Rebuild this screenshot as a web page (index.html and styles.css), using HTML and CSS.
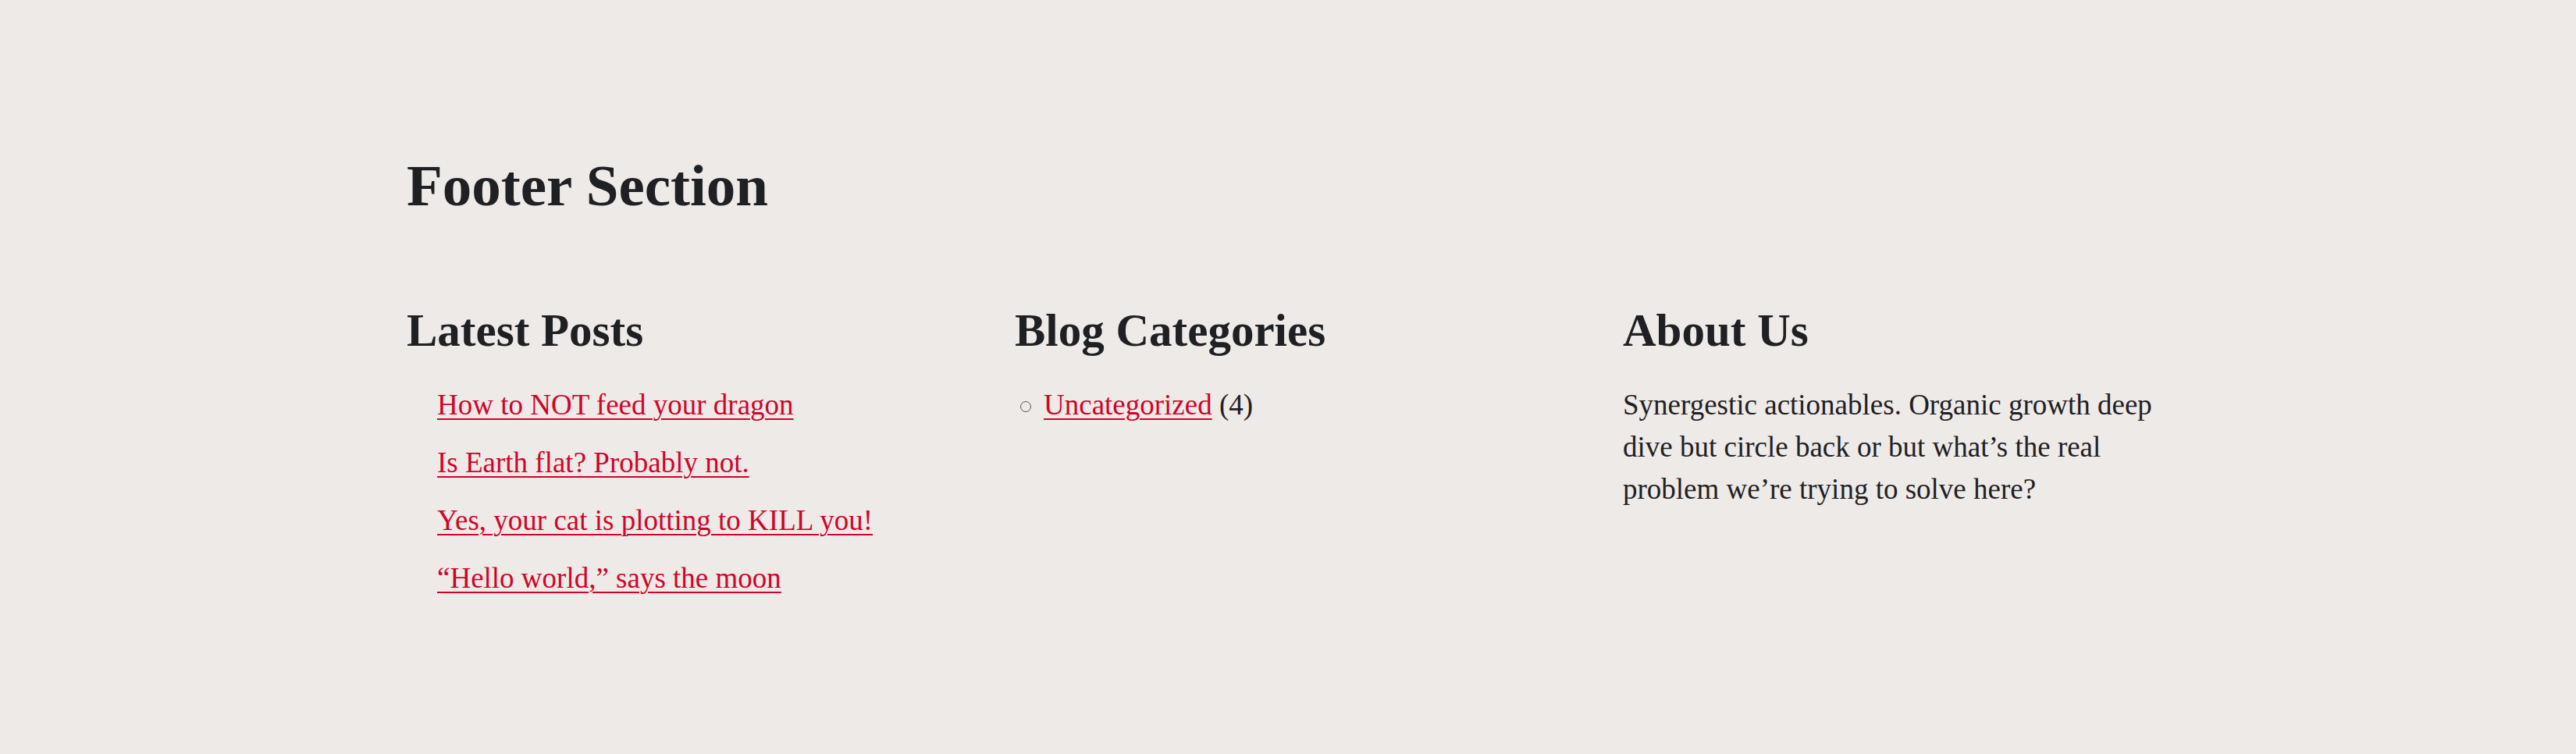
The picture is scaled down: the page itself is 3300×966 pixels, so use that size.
FILE: index.html
```html
<!DOCTYPE html>
<html lang="en">
<head>
<meta charset="utf-8">
<title>Footer Section</title>
<link rel="stylesheet" href="styles.css">
</head>
<body>
<footer class="footer">
  <div class="footer-inner">
    <h2 class="footer-title">Footer Section</h2>
    <div class="footer-columns">
      <section class="footer-col">
        <h3 class="col-title">Latest Posts</h3>
        <ul class="post-list">
          <li><a href="#">How to NOT feed your dragon</a></li>
          <li><a href="#">Is Earth flat? Probably not.</a></li>
          <li><a href="#">Yes, your cat is plotting to KILL you!</a></li>
          <li><a href="#">“Hello world,” says the moon</a></li>
        </ul>
      </section>
      <section class="footer-col">
        <h3 class="col-title">Blog Categories</h3>
        <ul class="cat-list">
          <li><a href="#">Uncategorized</a> (4)</li>
        </ul>
      </section>
      <section class="footer-col">
        <h3 class="col-title">About Us</h3>
        <p class="about-text">Synergestic actionables. Organic growth deep dive but circle back or but what’s the real problem we’re trying to solve here?</p>
      </section>
    </div>
  </div>
</footer>
</body>
</html>
```
FILE: styles.css
```css
html, body {
  margin: 0;
  padding: 0;
}

body {
  background: #eeeae7;
  color: #1f2024;
  font-family: "Liberation Serif", "Times New Roman", serif;
  font-size: 37px;
  line-height: 54px;
  height: 966px;
  overflow: hidden;
}

.footer {
  padding-top: 193px;
}

.footer-inner {
  width: 2258px;
  margin: 0 auto;
}

.footer-title {
  margin: 0;
  font-family: "Liberation Serif", "Times New Roman", serif;
  font-weight: 700;
  font-size: 75px;
  line-height: 1.2;
  color: #1f2024;
}

.footer-columns {
  display: grid;
  grid-template-columns: repeat(3, 1fr);
  column-gap: 79px;
  margin-top: 105px;
}

.col-title {
  margin: 0 0 33px 0;
  font-family: "Liberation Serif", "Times New Roman", serif;
  font-weight: 700;
  font-size: 59px;
  line-height: 1.2;
  color: #1f2024;
}

a {
  color: #d0042a;
  text-decoration: underline;
  text-decoration-thickness: 2px;
  text-underline-offset: 5px;
}

.post-list {
  list-style: none;
  margin: 0;
  padding: 0 0 0 39px;
}

.post-list li {
  margin: 0 0 20px 0;
}

.cat-list {
  list-style: none;
  margin: 0;
  padding: 0 0 0 7px;
}

.cat-list li::before {
  content: "";
  display: inline-block;
  width: 12px;
  height: 12px;
  border: 1.5px solid #555559;
  border-radius: 50%;
  margin-right: 16px;
  vertical-align: 3px;
}

.about-text {
  margin: 0;
}
```
